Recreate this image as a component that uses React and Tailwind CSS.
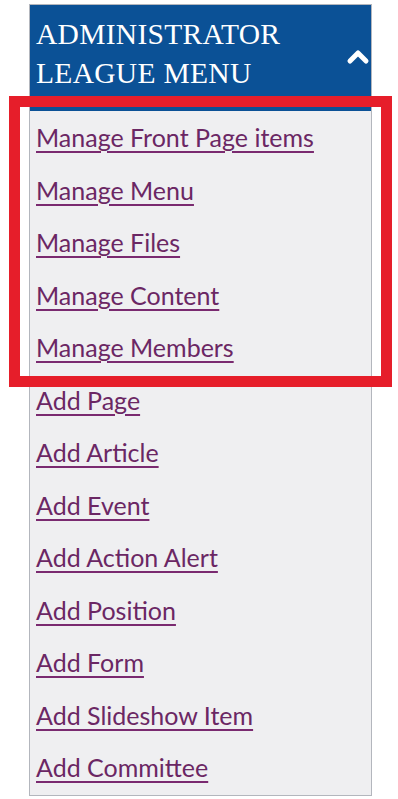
import React from 'react';

const links = [
    'Manage Front Page items',
    'Manage Menu',
    'Manage Files',
    'Manage Content',
    'Manage Members',
    'Add Page',
    'Add Article',
    'Add Event',
    'Add Action Alert',
    'Add Position',
    'Add Form',
    'Add Slideshow Item',
    'Add Committee',
];

const App = () => {
    return (
        <div className="relative w-full h-[799px] bg-white overflow-hidden">
            <div className="ml-[29px] pt-[4px] w-[343px]">
                <div className="border border-[#b3b6bd]">
                    <div className="flex items-center justify-between h-[106px] bg-[#0b5196] pl-[6px] pr-[1px] pb-[9px]">
                        <h2
                            className="text-white text-[29.5px] leading-[39px] tracking-[0.3px]"
                            style={{ fontFamily: '"Liberation Serif", serif' }}
                        >
                            ADMINISTRATOR
                            <br />
                            LEAGUE MENU
                        </h2>
                        <svg width="24" height="18" viewBox="0 0 24 18" className="mt-[4px]">
                            <polyline
                                points="4,14 12,6 20,14"
                                fill="none"
                                stroke="white"
                                strokeWidth="5"
                                strokeLinecap="round"
                                strokeLinejoin="round"
                            />
                        </svg>
                    </div>
                    <ul className="bg-[#efeff1] pl-[6px] pb-[1px]" style={{ fontFamily: 'Lato, sans-serif' }}>
                        {links.map((label) => (
                            <li key={label} className="leading-[52.5px] text-[25px]">
                                <a
                                    href="#"
                                    className="text-[#6b2764] underline decoration-[#7a2a70] decoration-2 underline-offset-[4px]"
                                >
                                    {label}
                                </a>
                            </li>
                        ))}
                    </ul>
                </div>
            </div>

            {/* highlight box drawn over the first links */}
            <div className="absolute left-[9px] top-[96px] w-[383px] h-[291px] border-[11px] border-[#e61e2a] pointer-events-none" />
        </div>
    );
};

export default App;
